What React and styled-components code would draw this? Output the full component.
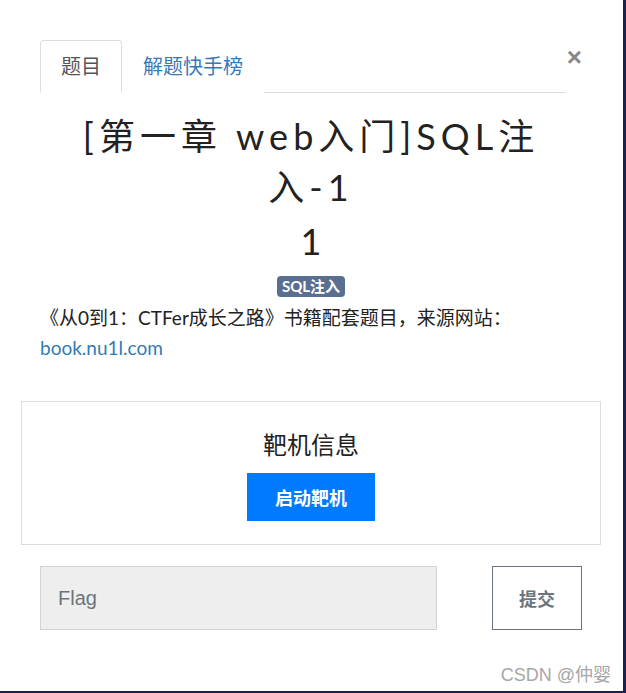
import styled, { createGlobalStyle } from "styled-components";

const GlobalStyle = createGlobalStyle`
  html, body {
    margin: 0;
    padding: 0;
    background: #1c2150;
  }
  body {
    font-family: Lato, "Noto Sans CJK SC", sans-serif;
    color: #333;
  }
`

const Modal = styled.div`
  position: relative;
  width: 623px;
  height: 691px;
  box-sizing: border-box;
  background: #fff;
  padding: 40px 41px 0 40px;
`

const Header = styled.div`
  display: flex;
  align-items: flex-start;
`

const Tabs = styled.div`
  flex: 1;
  display: flex;
  border-bottom: 1px solid #ddd;
`

const Tab = styled.div`
  padding: 10px 20px 11px;
  font-size: 20px;
  line-height: 30px;
  margin-bottom: -1px;
  border: 1px solid ${p => (p.$active ? "#ddd" : "transparent")};
  border-bottom-color: ${p => (p.$active ? "#fff" : "transparent")};
  border-radius: 4px 4px 0 0;
  color: ${p => (p.$active ? "#555" : "#337ab7")};
  background: #fff;
`

const Close = styled.button`
  width: 16px;
  margin-top: 4px;
  padding: 0;
  border: none;
  background: none;
  font-family: "Liberation Sans", Arial, sans-serif;
  font-size: 26px;
  font-weight: bold;
  line-height: 26px;
  color: #888;
  text-align: right;
`

const Title = styled.h2`
  max-width: 500px;
  margin: 18px auto 0;
  text-align: center;
  font-size: 36px;
  font-weight: 400;
  line-height: 51px;
  letter-spacing: 5px;
  color: #222;
`

const Score = styled.div`
  margin-top: 7px;
  text-align: center;
  font-size: 36px;
  line-height: 43px;
  color: #222;
`

const Tags = styled.div`
  margin-top: 13px;
  display: flex;
  justify-content: center;
`

const Badge = styled.span`
  background: #5a6f8f;
  color: #fff;
  font-size: 15px;
  font-weight: 700;
  line-height: 21px;
  padding: 0 5px;
  border-radius: 4px;
`

const Desc = styled.p`
  margin: 6px 0 0;
  font-size: 19px;
  line-height: 30px;
  color: #222;
`

const Link = styled.a`
  color: #337ab7;
  text-decoration: none;
`

const Card = styled.div`
  margin: 38px -19px 0 -19px;
  border: 1px solid #ddd;
  padding: 28px 0 23px;
  display: flex;
  flex-direction: column;
  align-items: center;
`

const CardTitle = styled.div`
  font-size: 24px;
  line-height: 30px;
  color: #222;
`

const PrimaryButton = styled.button`
  margin-top: 13px;
  width: 128px;
  height: 48px;
  border: none;
  background: #007bff;
  color: #fff;
  font-family: Lato, "Noto Sans CJK SC", sans-serif;
  font-size: 18px;
  font-weight: 700;
`

const FlagRow = styled.div`
  margin-top: 21px;
  display: flex;
  justify-content: space-between;
`

const FlagInput = styled.input`
  width: 397px;
  height: 64px;
  box-sizing: border-box;
  background: #eee;
  border: 1px solid #ced4da;
  padding: 0 17px;
  font-family: "Liberation Sans", Arial, sans-serif;
  font-size: 20px;
  color: #495057;
  &::placeholder {
    color: #6c757d;
  }
`

const OutlineButton = styled.button`
  width: 90px;
  height: 64px;
  background: #fff;
  border: 1px solid #6c757d;
  color: #6c757d;
  font-family: Lato, "Noto Sans CJK SC", sans-serif;
  font-size: 18px;
  font-weight: 700;
`

const Watermark = styled.div`
  position: absolute;
  right: 12px;
  bottom: 5px;
  font-family: "Liberation Sans", "Noto Sans CJK SC", sans-serif;
  font-size: 18px;
  color: #a6a6a6;
`

export default function App() {
  return (
    <>
      <GlobalStyle />
      <Modal>
        <Header>
          <Tabs>
            <Tab $active>题目</Tab>
            <Tab>解题快手榜</Tab>
          </Tabs>
          <Close>×</Close>
        </Header>
        <Title>[第一章 web入门]SQL注入-1</Title>
        <Score>1</Score>
        <Tags>
          <Badge>SQL注入</Badge>
        </Tags>
        <Desc>
          《从0到1：CTFer成长之路》书籍配套题目，来源网站：
          <br />
          <Link href="#">book.nu1l.com</Link>
        </Desc>
        <Card>
          <CardTitle>靶机信息</CardTitle>
          <PrimaryButton>启动靶机</PrimaryButton>
        </Card>
        <FlagRow>
          <FlagInput placeholder="Flag" />
          <OutlineButton>提交</OutlineButton>
        </FlagRow>
        <Watermark>CSDN @仲婴</Watermark>
      </Modal>
    </>
  );
}
